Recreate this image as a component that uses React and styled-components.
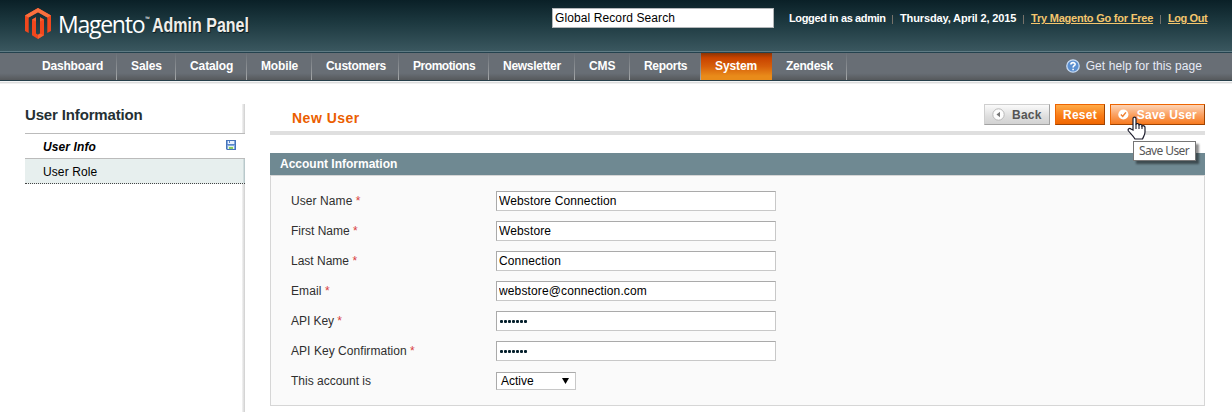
import React from 'react';
import styled, { createGlobalStyle, css } from 'styled-components';

const GlobalStyle = createGlobalStyle`
  *, *::before, *::after { box-sizing: border-box; }
  html { overflow: hidden; }
  body {
    margin: 0;
    background: #fff;
    color: #2f2f2f;
    font: 12px/16px "Liberation Sans", Arial, sans-serif;
  }
`;

const Page = styled.div`
  position: relative;
  height: 412px;
  overflow: hidden;
`;

const Header = styled.header`
  display: flex;
  align-items: flex-start;
  height: 53px;
  padding: 8px 24px 0 25px;
  background: linear-gradient(#0a2027, #1d3940 45%, #3a575f);
  background-size: 100% 51px;
  background-repeat: no-repeat;
  border-bottom: 1px solid #24424e;
  box-shadow: inset 0 -1px #5f7b84;
`;

const Logo = styled.div`
  display: flex;
  width: 527px;
  height: 32px;
  color: #fff;
  white-space: nowrap;
`;

const Brand = styled.span`
  display: flex;
  width: 94px;
  margin-left: 6px;
  font: 500 23px/32px "Open Sans", sans-serif;
  letter-spacing: -1.25px;
`;

const Trademark = styled.span`
  margin: 4px 0 0 1px;
  font-size: 6px;
  line-height: 14px;
  letter-spacing: 0;
`;

const Product = styled.span`
  font: 700 20px/34px "Liberation Sans", Arial, sans-serif;
  color: #f0eeea;
  text-shadow: 1px 1px 1px #0a1a20;
  transform: scaleX(0.8);
  transform-origin: left;
`;

const Search = styled.input`
  width: 222px;
  height: 20px;
  padding: 0 2px;
  border: 1px solid #b4b7b9;
  background: #fff;
  color: #000;
  font: inherit;
  letter-spacing: 0.1px;
  outline: 0;
`;

const Account = styled.div`
  display: flex;
  margin: 3px 0 0 15px;
  color: #fff;
  font-weight: 700;
  font-size: 11px;
  line-height: 15px;
  white-space: nowrap;
`;

const AccountItem = styled.span`
  width: ${(p) => p.$width}px;
  letter-spacing: ${(p) => p.$track || 0}px;
`;

const AccountLink = styled(AccountItem)`
  color: #f4c66d;
  text-decoration: underline;
`;

const Pipe = styled.span`
  width: 1px;
  height: 9px;
  margin: 4px ${(p) => p.$right}px 0 ${(p) => p.$left}px;
  background: #77726a;
`;

const Nav = styled.nav`
  display: flex;
  height: 28px;
  padding: 0 30px 0 28px;
  background: linear-gradient(#686e75, #686e75 75%, #56595c);
  border-bottom: 1px solid #263f4a;
  box-shadow: 0 1px #f4f5f6, 0 2px #dddddd, 0 3px #f0f0f0;
  color: #fff;
  font-weight: 700;
  line-height: 26px;
  white-space: nowrap;
`;

const NavItem = styled.a`
  width: ${(p) => p.$width}px;
  padding-left: 14px;
  letter-spacing: ${(p) => p.$track || 0}px;
  background: linear-gradient(#6a7077, #a5a8aa) right / 1px 100% no-repeat;
  ${(p) => p.$active && css`
    background: linear-gradient(#8c3405, #c84300 18%, #d65e0a 50%, #e98b1a 85%);
  `}
`;

const Help = styled.a`
  display: flex;
  align-items: center;
  gap: 6px;
  margin-left: auto;
  color: #e6eaf6;
  height: 26px;
  font-weight: 400;
  letter-spacing: 0.07px;
`;

const Body = styled.div`
  display: flex;
  align-items: flex-start;
  gap: 25px;
  padding: 23px 27px 0 25px;
`;

const Sidebar = styled.aside`
  width: 220px;
  height: 308px;
  background: linear-gradient(90deg, #f4f4f4, #cfcfcf) right / 3px 100% no-repeat;
`;

const SideTitle = styled.h3`
  height: 30px;
  margin: 0;
  border-bottom: 1px solid #bbb;
  color: #253033;
  font-size: 15px;
  line-height: 22px;
  letter-spacing: -0.15px;
`;

const SideItem = styled.a`
  display: flex;
  justify-content: space-between;
  height: 25px;
  padding: 0 9px 0 18px;
  border-bottom: 1px dotted #444;
  background: linear-gradient(90deg, #dbe6e6, #aebfc2) right / 2px 100% no-repeat #e7efee;
  color: #000;
  line-height: 26px;
  letter-spacing: 0.1px;
  ${(p) => p.$active && css`
    background: #fff;
    border-bottom: 1px solid #bbb;
    font-weight: 700;
    font-style: italic;
  `}
  svg { margin-top: 6px; }
`;

const Main = styled.main`
  width: 935px;
`;

const ContentHeader = styled.div`
  display: flex;
  gap: 5px;
  height: 31px;
  margin-bottom: 18px;
  border-bottom: 4px solid #dfdfdf;
`;

const Title = styled.h2`
  flex: 1;
  margin: 0;
  padding-left: 22px;
  color: #eb5e00;
  font-size: 14px;
  line-height: 28px;
  letter-spacing: 0.5px;
`;

const Button = styled.button`
  display: flex;
  align-items: center;
  gap: ${(p) => p.$gap || 7}px;
  width: ${(p) => p.$width}px;
  height: 21px;
  padding: 0 7px;
  border: 1px solid;
  border-color: #ed6502 #a04300 #a04300 #ed6502;
  background: linear-gradient(#ffab48, #f97c18 55%, #f06600);
  color: #fff;
  font: 700 12px/18px "Liberation Sans", Arial, sans-serif;
  letter-spacing: 0.25px;
  white-space: nowrap;
  ${(p) => p.$variant === 'plain' && css`
    border-color: #cfcfcf #a2a2a2 #a2a2a2 #cfcfcf;
    background: linear-gradient(#fafafa, #dedede 60%, #d2d2d2);
    color: #555;
  `}
  ${(p) => p.$variant === 'hover' && css`
    background: linear-gradient(#fdd4b6, #fba264 50%, #f77a20);
  `}
`;

const PanelHead = styled.h4`
  height: 22px;
  margin: 0;
  padding-left: 10px;
  background: #6f8992;
  color: #fff;
  font-size: 12px;
  line-height: 22px;
`;

const Fieldset = styled.div`
  display: flex;
  flex-direction: column;
  gap: 10px;
  height: 231px;
  padding: 15px 20px;
  border: 1px solid #d6d6d6;
  background: #fafafa;
`;

const Row = styled.label`
  display: flex;
  align-items: center;
  height: 20px;
`;

const Label = styled.span`
  width: 205px;
  letter-spacing: ${(p) => p.$track || 0}px;
`;

const Required = styled.span`
  color: #d84040;
`;

const Field = styled.input`
  width: 280px;
  height: 20px;
  padding: 0 2px;
  border: 1px solid;
  border-color: #aaa #c8c8c8 #c8c8c8 #aaa;
  background: #fff;
  color: #000;
  font: inherit;
  letter-spacing: 0.13px;
  outline: 0;
`;

const Dots = styled.span`
  display: flex;
  align-items: center;
  gap: 1px;
  width: 280px;
  height: 20px;
  padding-left: 3px;
  border: 1px solid;
  border-color: #aaa #c8c8c8 #c8c8c8 #aaa;
  background: #fff;
`;

const Dot = styled.i`
  width: 3px;
  height: 3px;
  border-radius: 1px;
  background: #06202c;
`;

const Select = styled.span`
  display: flex;
  align-items: center;
  justify-content: space-between;
  width: 80px;
  height: 18px;
  padding: 0 6px 0 4px;
  border: 1px solid;
  border-color: #aaa #c8c8c8 #c8c8c8 #aaa;
  background: #fff;
  color: #000;
`;

const Tooltip = styled.div`
  position: absolute;
  left: 1133px;
  top: 141px;
  width: 63px;
  height: 20px;
  padding-left: 5px;
  border: 1px solid #767676;
  background: #fff;
  box-shadow: 3px 3px 2px rgba(0, 0, 0, 0.45);
  color: #575757;
  font: 12px/18px "Noto Sans", sans-serif;
  letter-spacing: -0.6px;
  white-space: nowrap;
`;

const Pointer = styled.svg`
  position: absolute;
  left: 1127px;
  top: 116px;
`;

const MagentoMark = () => (
  <svg width="27" height="32" viewBox="0 0 27 32">
    <path d="M13 0 26 7.5V23l-3.7 2V9.6L13 4.3 3.700 9.600V25L0 23V7.500Z" fill="#f1471d" />
    <path d="M13 0 26 7.500 22.300 9.600 13 4.300 3.700 9.600 0 7.500Z" fill="#f9703f" />
    <path d="M7 11.500 11 9.200V25.500L13 26.700 15 25.500V9.200L19 11.500V27.300L13 31 7 27.300Z" fill="#f1471d" />
    <path d="M7 11.500 11 9.200V13.500ZM15 9.200 19 11.500 15 13.500ZM15 25.500 19 27.300 13 31V26.700Z" fill="#f9703f" opacity=".65" />
  </svg>
);

const HelpIcon = () => (
  <svg width="14" height="14" viewBox="0 0 14 14">
    <circle cx="7" cy="7" r="6.200" fill="#5b8fd0" stroke="#c9dcf3" strokeWidth="1.300" />
    <path d="M4.900 5.500C5 3 9.200 3.100 9.100 5.400 9 6.800 7.100 6.700 7.100 8.500M7.100 9.700V11.200" fill="none" stroke="#fff" strokeWidth="1.600" />
  </svg>
);

const DiskIcon = () => (
  <svg width="10" height="10" viewBox="0 0 10 10">
    <path d="M0 0H10V10H1L0 9Z" fill="#4673b8" />
    <path d="M1 1H9V9H1Z" fill="#82a9e0" />
    <path d="M2 1H8V4H2Z" fill="#e9f1fd" />
    <path d="M3 1H4V3H3Z" fill="#5c86c4" />
    <path d="M1 4H9V5H1Z" fill="#5a86ca" />
    <path d="M2 6H8V9H2Z" fill="#e6f3e2" />
    <path d="M3 7H7V9H3Z" fill="#86cc62" />
  </svg>
);

const BackIcon = () => (
  <svg width="13" height="13" viewBox="0 0 13 13">
    <circle cx="6.500" cy="6.500" r="5.700" fill="#fdfdfd" stroke="#b8b8b8" />
    <path d="M8 3.800V9.200L4.500 6.500Z" fill="#777" />
  </svg>
);

const CheckIcon = () => (
  <svg width="13" height="13" viewBox="0 0 13 13">
    <circle cx="6.500" cy="6.500" r="6.200" fill="#fff" />
    <path d="M3.500 6.600 5.700 8.900 9.600 3.900" fill="none" stroke="#f08030" strokeWidth="1.800" />
  </svg>
);

const menu = [
  ['Dashboard', 89, -0.18], ['Sales', 59, -0.1], ['Catalog', 71, -0.1], ['Mobile', 65, -0.15],
  ['Customers', 87, -0.3], ['Promotions', 90, -0.45], ['Newsletter', 86, -0.28], ['CMS', 55, -0.1],
  ['Reports', 71, -0.3], ['System', 71, -0.1], ['Zendesk', 75, -0.25],
];

const fields = [
  ['User Name', 'Webstore Connection', 0.08],
  ['First Name', 'Webstore', 0],
  ['Last Name', 'Connection', 0],
  ['Email', 'webstore@connection.com', 0.1],
  ['API Key', null, -0.05],
  ['API Key Confirmation', null, 0.05],
];

export default function App() {
  return (
    <Page>
      <GlobalStyle />
      <Header>
        <Logo>
          <MagentoMark />
          <Brand>Magento<Trademark>™</Trademark></Brand>
          <Product>Admin Panel</Product>
        </Logo>
        <Search defaultValue="Global Record Search" />
        <Account>
          <AccountItem $width={96} $track={-0.37}>Logged in as admin</AccountItem>
          <Pipe $left={7} $right={7} />
          <AccountItem $width={117} $track={-0.13}>Thursday, April 2, 2015</AccountItem>
          <Pipe $left={6} $right={7} />
          <AccountLink $width={122} $track={-0.22}>Try Magento Go for Free</AccountLink>
          <Pipe $left={7} $right={7} />
          <AccountLink $width={39} $track={-0.42}>Log Out</AccountLink>
        </Account>
      </Header>
      <Nav>
        {menu.map(([name, width, track]) => (
          <NavItem key={name} $width={width} $track={track} $active={name === 'System'}>{name}</NavItem>
        ))}
        <Help><HelpIcon />Get help for this page</Help>
      </Nav>
      <Body>
        <Sidebar>
          <SideTitle>User Information</SideTitle>
          <SideItem $active>User Info<DiskIcon /></SideItem>
          <SideItem>User Role</SideItem>
        </Sidebar>
        <Main>
          <ContentHeader>
            <Title>New User</Title>
            <Button $variant="plain" $width={66}><BackIcon />Back</Button>
            <Button $width={50}>Reset</Button>
            <Button $variant="hover" $width={95} $gap={8}><CheckIcon />Save User</Button>
          </ContentHeader>
          <PanelHead>Account Information</PanelHead>
          <Fieldset>
            {fields.map(([name, value, track]) => (
              <Row key={name}>
                <Label $track={track}>{name} <Required>*</Required></Label>
                {value
                  ? <Field defaultValue={value} />
                  : <Dots>{Array.from({ length: 7 }, (_, i) => <Dot key={i} />)}</Dots>}
              </Row>
            ))}
            <Row>
              <Label>This account is</Label>
              <Select>
                Active
                <svg width="7" height="6" viewBox="0 0 7 6"><path d="M0 0H7L3.500 6Z" /></svg>
              </Select>
            </Row>
          </Fieldset>
        </Main>
      </Body>
      <Tooltip>Save User</Tooltip>
      <Pointer width="19" height="24" viewBox="0 0 19 24">
        <path
          d="M6 14V2.700C6 .6 9 .6 9 2.700V8.500C9.500 6.900 12 7.300 12 9.200 12.700 7.900 15 8.400 15 10.100 16 9.300 18 9.800 18 11.600V16C18 19 16.500 20.500 15.500 23H8C6.500 20 3.500 17.500 1.500 15 .3 13 2.500 11.700 4 13Z"
          fill="#fff" stroke="#1b1b2b" strokeWidth="1.200"
        />
        <path d="M9 8V13M12 9V13M15 10V13" stroke="#1b1b2b" strokeWidth="1.100" />
      </Pointer>
    </Page>
  );
}
